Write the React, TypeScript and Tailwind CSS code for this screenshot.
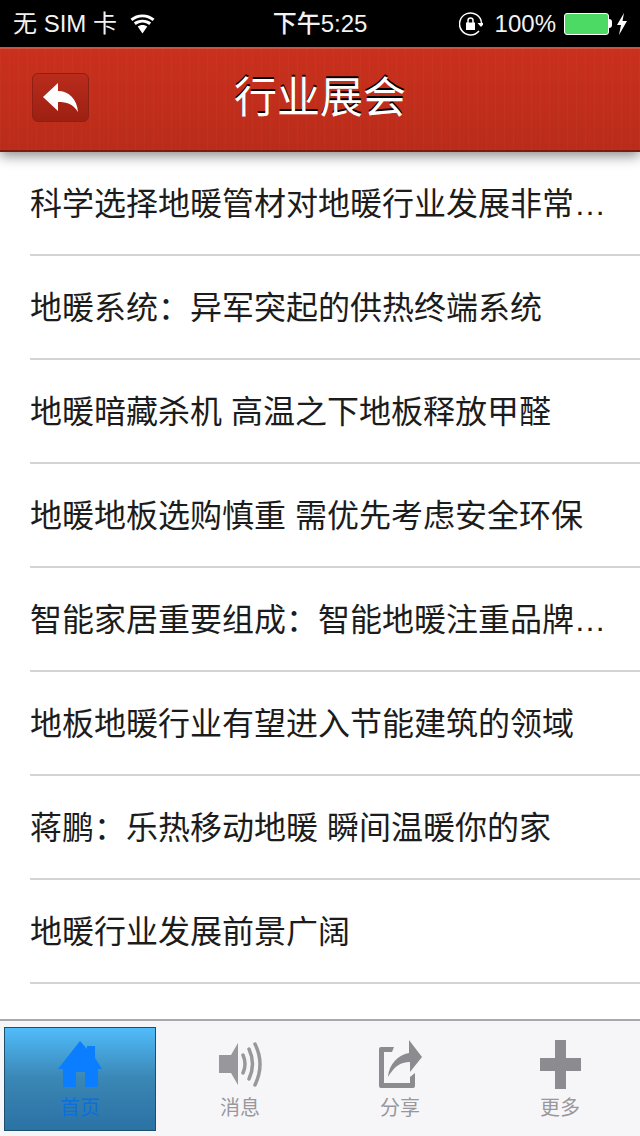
const FONT = "font-['Liberation_Sans','Noto_Sans_CJK_SC',sans-serif]";

const ITEMS = [
  "科学选择地暖管材对地暖行业发展非常…",
  "地暖系统：异军突起的供热终端系统",
  "地暖暗藏杀机 高温之下地板释放甲醛",
  "地暖地板选购慎重 需优先考虑安全环保",
  "智能家居重要组成：智能地暖注重品牌…",
  "地板地暖行业有望进入节能建筑的领域",
  "蒋鹏：乐热移动地暖 瞬间温暖你的家",
  "地暖行业发展前景广阔",
  "南方采暖分战已打响地暖市场受追捧",
];

function StatusBar() {
  return (
    <div className="flex h-[47px] shrink-0 items-center justify-between bg-black px-[13px] text-[24px] text-[#f2f2f2]">
      <div className="flex w-[200px] items-center gap-[13px]">
        <span>无 SIM 卡</span>
        <svg width="25" height="22" viewBox="0 0 26 22" fill="white">
          <path d="M13 4c4 0 7.500 1.500 10.500 4l2-2.500C22 2.500 17.800 1 13 1S4 2.500.500 5.500l2 2.500C5.500 5.500 9 4 13 4z" />
          <path d="M13 9.500c2.700 0 5 1 7 2.500l2-2.500C19.500 7.500 16.500 6.500 13 6.500s-6.500 1-9 3l2 2.500c2-1.500 4.300-2.500 7-2.500z" />
          <path d="M13 12c-2 0-3.600.6-5 1.700L13 21l5-7.300C16.600 12.600 15 12 13 12z" />
        </svg>
      </div>
      <span className="font-medium">下午5:25</span>
      <div className="flex w-[200px] items-center justify-end">
        <svg width="24" height="24" viewBox="0 0 24 24" fill="none" stroke="white" strokeWidth="1.500">
          <path d="M20 19A11 11 0 1 1 22.500 11" />
          <path d="M18.500 11h7l-3.500 4z" fill="white" stroke="none" />
          <rect x="7" y="10.500" width="9" height="7.500" fill="white" stroke="none" />
          <path d="M9 11V8.500a2.500 2.500 0 0 1 5 0V11" />
        </svg>
        <span className="ml-[12px]">100%</span>
        <div className="ml-[8px] flex items-center">
          <div className="h-[22px] w-[45px] rounded-[3px] border border-white bg-[#4cd964]" />
          <div className="h-[9px] w-[3px] rounded-r-sm bg-white" />
        </div>
        <svg className="ml-[5px]" width="10" height="22" viewBox="0 0 10 22" fill="white">
          <path d="M7 0L0 12h4l-2 10 8-14H5.500z" />
        </svg>
      </div>
    </div>
  );
}

function Header() {
  return (
    <div className="relative z-10 flex h-[105px] shrink-0 items-center border-t-2 border-b-2 border-t-[#d0513c] border-b-[#7c1c10] bg-[image:repeating-linear-gradient(90deg,rgba(255,255,255,0.025)_0_1px,transparent_1px_9px),linear-gradient(#c9301d,#ba2c1a)] pb-[4px] pl-[32px] shadow-[0_4px_12px_rgba(0,0,0,0.45)]">
      <button className="flex h-[49px] w-[57px] items-center justify-center rounded-[6px] border border-[#8f1f12] bg-gradient-to-b from-[#b92c1c] to-[#9d2012]">
        <svg width="35" height="29" viewBox="0 0 35 29" fill="white">
          <path d="M0 14L15 0v8c11 0 19 8 20 21-5-8-11-10-20-10v9z" />
        </svg>
      </button>
      <h1 className="mt-[2px] ml-[145px] text-[43px] leading-none text-white [text-shadow:0_-2px_0_#000]">行业展会</h1>
    </div>
  );
}

function TabLabel({ children }: { children: string }) {
  return <span className="mt-[9px] text-[20px] leading-[20px]">{children}</span>;
}

function TabBar() {
  return (
    <div className="relative z-10 grid h-[117px] shrink-0 grid-cols-4 border-t-2 border-[#a9a9ad] bg-[#f6f6f8] text-[#98989c]">
      <div className="mx-auto mt-[6px] flex h-[104px] w-[152px] flex-col items-center border border-[#1c4f6e] bg-gradient-to-b from-[#50bcfb] via-[#3a86b4] to-[#2b72a5] pt-[12px] text-[#0a6fe0]">
        <svg width="44" height="49" viewBox="0 0 44 49" fill="#0a7eff">
          <path d="M22 1l7 8V6h8v12l7 11h-4v18H27V32h-9v15H5V29H0z" />
        </svg>
        <TabLabel>首页</TabLabel>
      </div>
      <div className="flex flex-col items-center pt-[19px]">
        <svg width="43" height="49" viewBox="0 0 43 49" fill="#98989c">
          <path d="M0 15h12l7-12v42l-7-12H0z" />
          <path d="M24 15q4 9 0 18M30 9q7 15 0 30M36 4q10 20 0 41" fill="none" stroke="#98989c" strokeWidth="3.500" strokeLinecap="round" />
        </svg>
        <TabLabel>消息</TabLabel>
      </div>
      <div className="flex flex-col items-center pt-[19px]">
        <svg width="43" height="49" viewBox="0 0 43 49" fill="#8c8c90">
          <path d="M15 7H2a2 2 0 0 0-2 2v37a2 2 0 0 0 2 2h32a2 2 0 0 0 2-2V33l-5 4v6H5V12h8z" />
          <path d="M9 37C10 24 19 15 30 13V0l13 17-12 15V22C21 22 15 27 9 37z" />
        </svg>
        <TabLabel>分享</TabLabel>
      </div>
      <div className="flex flex-col items-center pt-[19px]">
        <svg width="41" height="49" viewBox="0 0 41 49" fill="#8c8c90">
          <path d="M15 0h11v18h15v13H26v18H15V31H0V18h15z" />
        </svg>
        <TabLabel>更多</TabLabel>
      </div>
    </div>
  );
}

export default function App() {
  return (
    <div className={`flex h-[1136px] w-[640px] flex-col overflow-hidden bg-white ${FONT}`}>
      <StatusBar />
      <Header />
      <div className="min-h-0 flex-1 overflow-hidden pl-[30px]">
        {ITEMS.map((text) => (
          <div key={text} className="flex h-[104px] items-center border-b-2 border-[#d4d4d6] pt-[2px] text-[32px] whitespace-nowrap text-[#1c1c1c]">
            {text}
          </div>
        ))}
      </div>
      <TabBar />
    </div>
  );
}
